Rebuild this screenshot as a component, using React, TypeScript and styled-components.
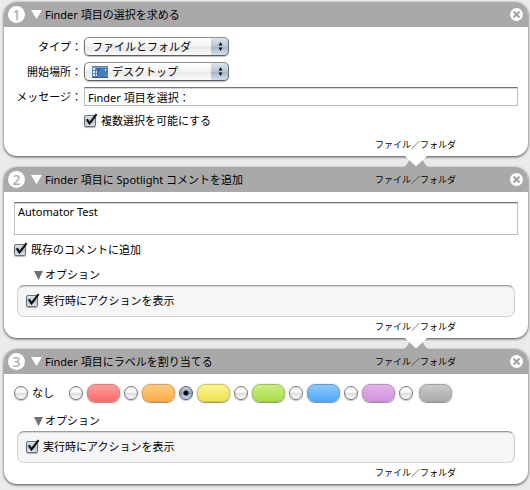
import React, { ReactNode, useState } from "react";
import styled, { createGlobalStyle } from "styled-components";

const GlobalStyle = createGlobalStyle`
  * { box-sizing: border-box; }
  body {
    margin: 0;
    background: #ebebeb;
    color: #000;
    font-family: "Noto Sans", "Noto Sans CJK JP", sans-serif;
    font-size: 11px;
    line-height: 16px;
  }
  button, input, select, textarea { font: inherit; color: inherit; margin: 0; }
`;

const Workflow = styled.main`
  display: flex;
  flex-direction: column;
  gap: 11px;
  padding: 2px 2px 5px 4px;
`;

const Card = styled.section`
  position: relative;
  display: flex;
  flex-direction: column;
  border-radius: 13px;
  background: #fff;
  box-shadow: 0 1px 3px rgba(0, 0, 0, 0.7);
`;

const Header = styled.header`
  display: flex;
  align-items: center;
  height: 25px;
  padding: 0 5px 0 4px;
  border-radius: 13px 13px 0 0;
  background: #a9a9a9;
`;

const StepNumber = styled.span`
  width: 17px;
  height: 17px;
  border-radius: 50%;
  background: #fff;
  color: #acacac;
  font-size: 14px;
  font-weight: 500;
  line-height: 17px;
  text-align: center;
`;

const IconButton = styled.button`
  display: flex;
  flex: none;
  padding: 0;
  border: 0;
  background: none;
`;

const Toggle = styled(IconButton)`
  margin: 0 3px 0 6px;
`;

const Title = styled.h2`
  flex: 1;
  margin: 0;
  font-size: 11px;
  font-weight: 400;
  white-space: nowrap;
`;

const DataType = styled.span`
  font-size: 9px;
  line-height: 12px;
  white-space: nowrap;
`;

const HeaderType = styled(DataType)`
  margin-right: 54px;
`;

const Footer = styled.footer`
  display: flex;
  justify-content: flex-end;
  padding: 4px 72px 5px 0;
`;

const Notch = styled.svg`
  position: absolute;
  z-index: 1;
  right: 100px;
  top: 100%;
`;

const Form = styled.div`
  display: grid;
  grid-template-columns: 68px 1fr;
  column-gap: 2px;
  row-gap: 6px;
  align-items: center;
  padding: 10px 10px 6px;
`;

const FieldLabel = styled.label`
  justify-self: end;
  white-space: nowrap;
`;

const PopUp = styled.span`
  position: relative;
  display: flex;
  width: 145px;
`;

const PopUpSelect = styled.select<{ $icon?: boolean }>`
  appearance: none;
  width: 100%;
  height: 19px;
  padding: 0 20px 0 ${(p) => (p.$icon ? 27 : 7)}px;
  border: 1px solid #6e6e6e;
  border-top-color: #8e8e8e;
  border-bottom-color: #5c5c5c;
  border-radius: 5px;
  background:
    linear-gradient(#dfe5ed, #b9c4d4 50%, #a4b2c6 51%, #d4e0ec) right / 17px 100% no-repeat,
    linear-gradient(#fff, #f3f3f3 50%, #e6e6e6 51%, #fbfbfb);
  box-shadow: 0 1px 1px rgba(0, 0, 0, 0.25);
  line-height: 16px;
`;

const PopUpArrows = styled.svg`
  position: absolute;
  right: 6px;
  top: 4px;
  pointer-events: none;
`;

const PopUpIcon = styled.svg`
  position: absolute;
  left: 8px;
  top: 4px;
  pointer-events: none;
`;

const fieldBorder = `
  border: 1px solid #bcbcbc;
  border-top-color: #747474;
  border-radius: 0;
  background: #fff;
  box-shadow: inset 0 1px 0 #d8d8d8;
  outline: 0;
`;

const TextField = styled.input`
  ${fieldBorder}
  width: 100%;
  height: 19px;
  padding: 0 3px;
`;

const CommentField = styled.textarea`
  ${fieldBorder}
  display: block;
  height: 33px;
  margin: 10px 10px 0;
  padding: 1px 3px;
  resize: none;
`;

const CheckLabel = styled.label`
  display: flex;
  align-items: center;
  gap: 5px;
`;

const FormCheck = styled.div`
  grid-column: 2;
  padding-top: 1px;
`;

const CommentCheck = styled.div`
  padding: 7px 10px 0;
`;

const CheckMark = styled.span`
  position: relative;
  display: flex;

  svg { position: absolute; left: 0; bottom: 0; display: none; pointer-events: none; }
  input:checked + svg { display: block; }
`;

const CheckInput = styled.input`
  appearance: none;
  width: 12px;
  height: 12px;
  border: 1px solid #66707c;
  border-radius: 2px;
  background: linear-gradient(#e4e7ea, #b3bdc7 50%, #dce6ee);
  box-shadow: 0 1px 1px rgba(0, 0, 0, 0.3);
`;

const OptionsToggle = styled.button`
  display: flex;
  align-self: flex-start;
  align-items: center;
  gap: 2px;
  margin: 9px 0 2px 30px;
  padding: 0;
  border: 0;
  background: none;
`;

const OptionsPanel = styled.div`
  height: 32px;
  margin: 0 13px;
  padding: 7px 8px;
  border: 1px solid #d4d4d4;
  border-top-color: #9c9c9c;
  border-radius: 7px;
  background: #f6f6f6;
  box-shadow: inset 0 1px 1px #d6d6d6;
`;

const LabelRow = styled.fieldset`
  display: flex;
  align-items: center;
  min-width: 0;
  height: 20px;
  margin: 10px 0 0;
  padding: 0 10px;
  border: 0;
`;

const ColorChoice = styled.label<{ $gap: number }>`
  display: flex;
  flex: none;
  align-items: center;
  gap: ${(p) => p.$gap}px;
  width: 55px;
  white-space: nowrap;
`;

const RadioInput = styled.input`
  appearance: none;
  flex: none;
  width: 14px;
  height: 14px;
  border: 1px solid #757575;
  border-radius: 50%;
  background: linear-gradient(#f4f4f4, #fff 40%, #dedede 55%, #fff);
  box-shadow: 0 1px 1px rgba(0, 0, 0, 0.25);

  &:checked {
    border-color: #4d596b;
    background:
      radial-gradient(circle, #080c14 0 2px, transparent 3px),
      linear-gradient(#c9d1dd, #8d9db3 50%, #cfdfef);
  }
`;

const Swatch = styled.span<{ $from: string; $to: string; $edge: string }>`
  width: 33px;
  height: 18px;
  flex: none;
  border: 1px solid ${(p) => p.$edge};
  border-radius: 8px;
  background: linear-gradient(${(p) => p.$from}, ${(p) => p.$to});
  box-shadow: 0 1px 1px rgba(0, 0, 0, 0.4), 0 0 1px 1px #eee;
`;

const DATA_TYPE = "ファイル／フォルダ";

const COLORS = [
  { name: "レッド", from: "#ff9f9b", to: "#fb6a68", edge: "#ea7572" },
  { name: "オレンジ", from: "#ffca82", to: "#fbad45", edge: "#e0a052" },
  { name: "イエロー", from: "#faf391", to: "#efe251", edge: "#d3c84e" },
  { name: "グリーン", from: "#c9ef80", to: "#a9dd4b", edge: "#9bc64f" },
  { name: "ブルー", from: "#8fc8ff", to: "#50aafb", edge: "#569fdd" },
  { name: "パープル", from: "#e4b4ea", to: "#d191de", edge: "#bf8bc9" },
  { name: "グレイ", from: "#c9c9c9", to: "#ababab", edge: "#a2a2a2" },
];

function Check({ children }: { children: ReactNode }) {
  return (
    <CheckLabel>
      <CheckMark>
        <CheckInput type="checkbox" defaultChecked />
        <svg width="14" height="14" viewBox="0 0 14 14" aria-hidden="true">
          <path d="M2.8 6.2 L5.5 10.4 L12.6 1.2" fill="none" stroke="#080808" strokeWidth="2" />
        </svg>
      </CheckMark>
      {children}
    </CheckLabel>
  );
}

function Arrows() {
  return (
    <PopUpArrows width="5" height="11" viewBox="0 0 5 11" aria-hidden="true">
      <path d="M2.5 1 L4.5 4.5 H0.5 Z M0.5 6.5 H4.5 L2.5 10 Z" fill="#111" />
    </PopUpArrows>
  );
}

function DesktopIcon() {
  return (
    <PopUpIcon width="16" height="12" viewBox="0 0 16 12" aria-hidden="true">
      <rect width="16" height="12" fill="#5681b8" />
      <rect x="5" y="1" width="7" height="9" fill="#3867a8" />
      <path d="M6 10 Q6 3 12 1 L15 1 V7 L9 10 Z" fill="#477bb9" />
      <path d="M0 1.5 H16" stroke="#81a2cd" />
      <path d="M1 2h2v2h-2z M1 5h2v2h-2z M1 8h2v2h-2z M4 5h1v2h-1z M4 8h1v2h-1z M13 3h1v2h-1z" fill="#e5eefb" />
      <path d="M0 11.5 H16" stroke="#30598f" />
    </PopUpIcon>
  );
}

function Connector() {
  return (
    <Notch width="24" height="11" viewBox="0 0 24 11" aria-hidden="true">
      <path d="M0 11 Q4 8 6 2 H18 Q20 8 24 11 Z" fill="#a9a9a9" />
      <path d="M1 0 H23 L12 10.5 Z" fill="#fff" />
    </Notch>
  );
}

interface ActionProps {
  step: number;
  title: string;
  input?: boolean;
  connected?: boolean;
  children: ReactNode;
}

function Action({ step, title, input, connected, children }: ActionProps) {
  const [open, setOpen] = useState(true);
  return (
    <Card>
      <Header>
        <StepNumber>{step}</StepNumber>
        <Toggle aria-label="表示を切り替える" aria-expanded={open} onClick={() => setOpen(!open)}>
          <svg width="11" height="9" viewBox="0 0 11 9" aria-hidden="true">
            <path d="M0 0 H11 L5.5 9 Z" fill="#fff" />
          </svg>
        </Toggle>
        <Title>{title}</Title>
        {input && <HeaderType>{DATA_TYPE}</HeaderType>}
        <IconButton aria-label="削除">
          <svg width="13" height="13" viewBox="0 0 13 13" aria-hidden="true">
            <circle cx="6.5" cy="6.5" r="6.5" fill="#fff" />
            <path d="M3.5 3.5 L9.5 9.5 M9.5 3.5 L3.5 9.5" stroke="#a0a0a0" strokeWidth="1.8" />
          </svg>
        </IconButton>
      </Header>
      {open && children}
      <Footer>
        <DataType>{DATA_TYPE}</DataType>
      </Footer>
      {connected && <Connector />}
    </Card>
  );
}

function Options() {
  const [open, setOpen] = useState(true);
  return (
    <>
      <OptionsToggle aria-expanded={open} onClick={() => setOpen(!open)}>
        <svg width="9" height="9" viewBox="0 0 9 9" aria-hidden="true">
          <path d="M0 0 H9 L4.5 9 Z" fill="#707070" />
        </svg>
        オプション
      </OptionsToggle>
      {open && (
        <OptionsPanel>
          <Check>実行時にアクションを表示</Check>
        </OptionsPanel>
      )}
    </>
  );
}

export default function App() {
  return (
    <>
      <GlobalStyle />
      <Workflow>
        <Action step={1} title="Finder 項目の選択を求める" connected>
          <Form>
            <FieldLabel htmlFor="kind">タイプ：</FieldLabel>
            <PopUp>
              <PopUpSelect id="kind">
                <option>ファイルとフォルダ</option>
              </PopUpSelect>
              <Arrows />
            </PopUp>
            <FieldLabel htmlFor="place">開始場所：</FieldLabel>
            <PopUp>
              <PopUpSelect id="place" $icon>
                <option>デスクトップ</option>
              </PopUpSelect>
              <DesktopIcon />
              <Arrows />
            </PopUp>
            <FieldLabel htmlFor="message">メッセージ：</FieldLabel>
            <TextField id="message" defaultValue="Finder 項目を選択：" />
            <FormCheck>
              <Check>複数選択を可能にする</Check>
            </FormCheck>
          </Form>
        </Action>

        <Action step={2} title="Finder 項目に Spotlight コメントを追加" input connected>
          <CommentField aria-label="コメント" defaultValue="Automator Test" />
          <CommentCheck>
            <Check>既存のコメントに追加</Check>
          </CommentCheck>
          <Options />
        </Action>

        <Action step={3} title="Finder 項目にラベルを割り当てる" input>
          <LabelRow aria-label="ラベル">
            <ColorChoice $gap={4}>
              <RadioInput type="radio" name="label" />
              なし
            </ColorChoice>
            {COLORS.map((c, i) => (
              <ColorChoice key={c.name} $gap={i === COLORS.length - 1 ? 6 : 4}>
                <RadioInput type="radio" name="label" aria-label={c.name} defaultChecked={i === 2} />
                <Swatch $from={c.from} $to={c.to} $edge={c.edge} />
              </ColorChoice>
            ))}
          </LabelRow>
          <Options />
        </Action>
      </Workflow>
    </>
  );
}
